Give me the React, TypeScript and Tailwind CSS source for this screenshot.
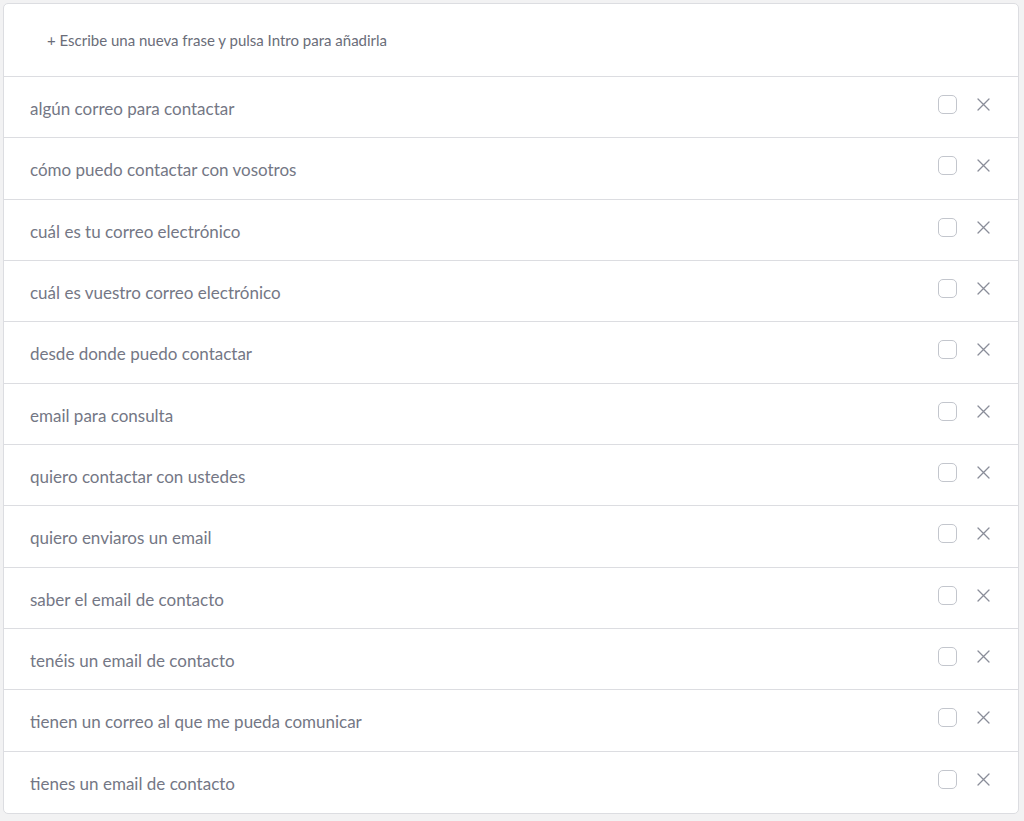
import { useState } from "react";

const phrases = [
  "algún correo para contactar",
  "cómo puedo contactar con vosotros",
  "cuál es tu correo electrónico",
  "cuál es vuestro correo electrónico",
  "desde donde puedo contactar",
  "email para consulta",
  "quiero contactar con ustedes",
  "quiero enviaros un email",
  "saber el email de contacto",
  "tenéis un email de contacto",
  "tienen un correo al que me pueda comunicar",
  "tienes un email de contacto",
];

const CloseIcon = () => (
  <svg width="13" height="13" viewBox="0 0 13 13" fill="none">
    <path d="M1 1L12 12M12 1L1 12" stroke="#8a8d99" strokeWidth="1.3" strokeLinecap="round" />
  </svg>
);

const App = () => {
  const [checked, setChecked] = useState<boolean[]>(phrases.map(() => false));

  return (
    <div
      className="min-h-screen w-full bg-[#f2f2f3] pt-[3px] pl-[3px] pr-[5px]"
      style={{ fontFamily: "Lato, 'Noto Sans', sans-serif" }}
    >
      <div className="w-[1016px] rounded-[5px] border border-[#dcdde1] bg-white">
        {/* new phrase input */}
        <div className="flex h-[73px] items-center border-b border-[#dcdde1] pl-[43px] pt-[1px]">
          <span className="text-[15px] text-[#6a6d79]">+ Escribe una nueva frase y pulsa Intro para añadirla</span>
        </div>

        {phrases.map((p, i) => (
          <div
            key={p}
            className={`flex h-[61.33px] items-center pl-[26px] pr-[28px] ${
              i < phrases.length - 1 ? "border-b border-[#dcdde1]" : ""
            }`}
          >
            <span className="flex-1 pt-[3px] text-[17px] text-[#747785]">{p}</span>
            <div className="flex items-center gap-[20px] pb-[5px]">
              <button
                onClick={() => setChecked((c) => c.map((v, j) => (j === i ? !v : v)))}
                className={`h-[19px] w-[19px] rounded-[5px] border-[1.5px] ${
                  checked[i] ? "border-[#747785] bg-[#747785]" : "border-[#c3c6cd] bg-white"
                }`}
              />
              <CloseIcon />
            </div>
          </div>
        ))}
      </div>
    </div>
  );
};

export default App;
